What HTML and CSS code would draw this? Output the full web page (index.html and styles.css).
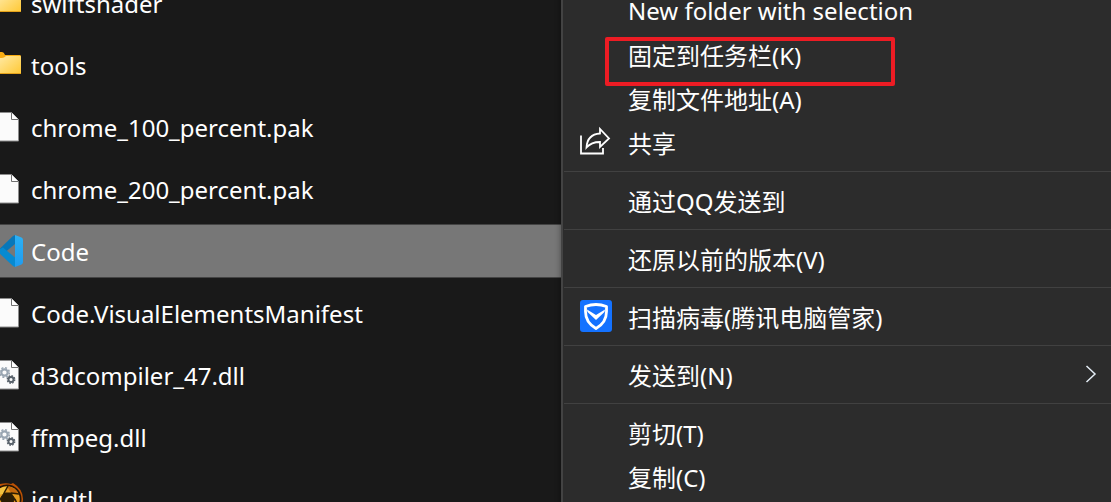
FILE: index.html
```
<!DOCTYPE html>
<html lang="zh-CN">
<head>
    <meta charset="UTF-8">
    <title>VSCode</title>
    <link rel="stylesheet" href="styles.css">
</head>
<body>
<svg class="defs" aria-hidden="true">
    <defs>
        <linearGradient id="folderFill" x1="0" y1="0" x2="1" y2="1">
            <stop offset="0" stop-color="#ffe9a2"/>
            <stop offset="1" stop-color="#ffc937"/>
        </linearGradient>
        <linearGradient id="codeFill" x1="0" y1="0" x2="0" y2="1">
            <stop offset="0" stop-color="#2bb1f5"/>
            <stop offset="1" stop-color="#1f9cf0"/>
        </linearGradient>
        <symbol id="folder" viewBox="0 0 24 32">
            <path fill="#f9ad12" d="M0 3h2q2 0 3 3h15q1 0 1 2v2H0z"/>
            <path fill="url(#folderFill)" d="M0 9h2q2 0 4-2h14q1 0 1 1v16H0z"/>
            <path fill="#e5a21a" d="M0 24h21v1H0z"/>
        </symbol>
        <symbol id="file" viewBox="0 0 24 32">
            <path fill="#fbfbfb" stroke="#8c8c8c" d="M-2 1.500h13.500l7 7v21.500h-20.500z"/>
            <path fill="#fff" stroke="#707070" d="M11.500 1.500v7h7"/>
        </symbol>
        <symbol id="dll" viewBox="0 0 24 32">
            <use href="#file"/>
            <g fill="none">
                <circle cx="4.500" cy="13.500" r="3.200" stroke="#9aa6b2" stroke-width="2.200"/>
                <circle cx="4.500" cy="13.500" r="4.800" stroke="#9aa6b2" stroke-width="1.600" stroke-dasharray="2 1.770"/>
                <circle cx="11" cy="20.500" r="2.500" stroke="#59626b" stroke-width="1.900"/>
                <circle cx="11" cy="20.500" r="3.700" stroke="#59626b" stroke-width="1.400" stroke-dasharray="1.600 1.300"/>
            </g>
        </symbol>
    </defs>
</svg>
<div class="window">
    <ul class="files">
        <li><svg><use href="#folder"/></svg><span>swiftshader</span></li>
        <li><svg><use href="#folder"/></svg><span>tools</span></li>
        <li><svg><use href="#file"/></svg><span>chrome_100_percent.pak</span></li>
        <li><svg><use href="#file"/></svg><span>chrome_200_percent.pak</span></li>
        <li class="selected">
            <svg viewBox="0 0 24 32">
                <path fill="#0877b9" d="M-2 15.500L13 1l2-1v9L3 19z"/>
                <path fill="#078ad1" d="M-2 15L3 12.500l12 10V32l-2-1-15-14z"/>
                <path fill="url(#codeFill)" d="M15 0l6.500 2.600q1.500.8 1.500 2.400v22q0 1.600-1.500 2.400L15 32z"/>
            </svg>
            <span>Code</span>
        </li>
        <li><svg><use href="#file"/></svg><span>Code.VisualElementsManifest</span></li>
        <li><svg><use href="#dll"/></svg><span>d3dcompiler_47.dll</span></li>
        <li><svg><use href="#dll"/></svg><span>ffmpeg.dll</span></li>
        <li>
            <svg viewBox="0 0 24 32">
                <path fill="#bd5204" d="M-6 3q10-4 17-2l2-1q10 6 10 16T10 31H-6z"/>
                <circle cx="7" cy="16" r="14.500" fill="#241507"/>
                <circle cx="7" cy="16" r="12.800" fill="#e59a1e"/>
                <path fill="#f2c23f" d="M-5 12Q-2 4 7 3.500L3 11z"/>
                <path fill="#c5680d" d="M7 3.500q8 0 12 8L11 10z"/>
                <path fill="#2a1c04" stroke="#2a1c04" d="M4 10h7l4 6-4 6H4l-4-6z"/>
                <path fill="none" stroke="#2a1c04" stroke-width="1.500" d="M4 10l4-7M11 10l8 1M15 16l3 7M0 16l-5-5"/>
            </svg>
            <span>icudtl</span>
        </li>
    </ul>
    <div class="menu" role="menu">
        <button type="button" role="menuitem"><i></i><span>New folder with selection</span></button>
        <button type="button" role="menuitem" class="marked"><i></i><span>固定到任务栏(K)</span></button>
        <button type="button" role="menuitem"><i></i><span>复制文件地址(A)</span></button>
        <button type="button" role="menuitem">
            <i><svg viewBox="0 0 32 32" fill="none" stroke="#fff" stroke-width="1.800">
                <path d="M1 9.500v18h22V22"/>
                <path d="M6.500 21.500C7 13 12 8 20 7.500V3l9 9.500-9 8.500v-5c-6 0-10 1.500-13.500 5.500z"/>
            </svg></i>
            <span>共享</span>
        </button>
        <hr>
        <button type="button" role="menuitem"><i></i><span>通过QQ发送到</span></button>
        <hr>
        <button type="button" role="menuitem"><i></i><span>还原以前的版本(V)</span></button>
        <hr>
        <button type="button" role="menuitem">
            <i><svg viewBox="0 0 32 32">
                <rect width="32" height="32" rx="3" fill="#1472ff"/>
                <path fill="none" stroke="#fff" stroke-width="2.800" stroke-linejoin="round" d="M5.500 6.500Q16 2.500 26.500 6.500v5q0 11-10.500 17Q5.500 22.500 5.500 11.500z"/>
                <path fill="#fff" d="M7 9.500l9 5.500 9-5.500-.5 2.500L16 20l-8.500-8z"/>
            </svg></i>
            <span>扫描病毒(腾讯电脑管家)</span>
        </button>
        <hr>
        <button type="button" role="menuitem" aria-haspopup="true">
            <i></i><span>发送到(N)</span>
            <svg class="arrow" viewBox="0 0 12 20"><path fill="none" stroke="#e4edf5" stroke-width="1.500" d="M1.500 2l8.500 8-8.500 8"/></svg>
        </button>
        <hr>
        <button type="button" role="menuitem"><i></i><span>剪切(T)</span></button>
        <button type="button" role="menuitem"><i></i><span>复制(C)</span></button>
    </div>
</div>
</body>
</html>
```
FILE: styles.css
```
* {
    margin: 0;
    padding: 0;
    box-sizing: border-box;
}

body {
    background: #191919;
    color: #fff;
    font-family: "Noto Sans", "Noto Sans CJK SC", sans-serif;
    font-size: 24px;
}

.defs {
    position: absolute;
    width: 0;
    height: 0;
}

.window {
    display: grid;
    grid-template-columns: 561fr 550fr;
    height: 100vh;
    overflow: hidden;
}

/* file list, scrolled part way through a row */
.files {
    display: flex;
    flex-direction: column;
    gap: 8px;
    margin-top: -24px;
    list-style: none;
}

.files li {
    display: flex;
    flex: none;
    align-items: center;
    gap: 7px;
    height: 54px;
    border: solid transparent;
    border-width: 1px 0;
    white-space: nowrap;
}

.files svg {
    width: 24px;
    height: 32px;
}

.files .selected {
    background: #777;
    border-color: #444;
}

/* context menu */
.menu {
    margin-top: -11px;
    padding-left: 1px;
    background: #2c2c2c;
    border-left: 2px solid #434343;
    box-shadow: 0 0 6px rgba(0, 0, 0, .4);
}

.menu button {
    display: flex;
    align-items: center;
    gap: 16px;
    position: relative;
    width: 100%;
    height: 44px;
    padding: 0 14px 2px 16px;
    border: 0;
    background: none;
    color: inherit;
    font: inherit;
    text-align: left;
    white-space: nowrap;
}

.menu i,
.menu i svg {
    display: block;
    width: 32px;
    height: 32px;
}

.menu hr {
    height: 1px;
    margin: 6px 0 7px;
    border: 0;
    background: #414141;
}

.menu .arrow {
    width: 12px;
    height: 20px;
    margin-left: auto;
}

.marked::after {
    content: "";
    box-sizing: border-box;
    position: absolute;
    top: 4px;
    left: 41px;
    width: 290px;
    height: 49px;
    border: 4px solid #ed1c24;
    border-radius: 2px;
}
```
